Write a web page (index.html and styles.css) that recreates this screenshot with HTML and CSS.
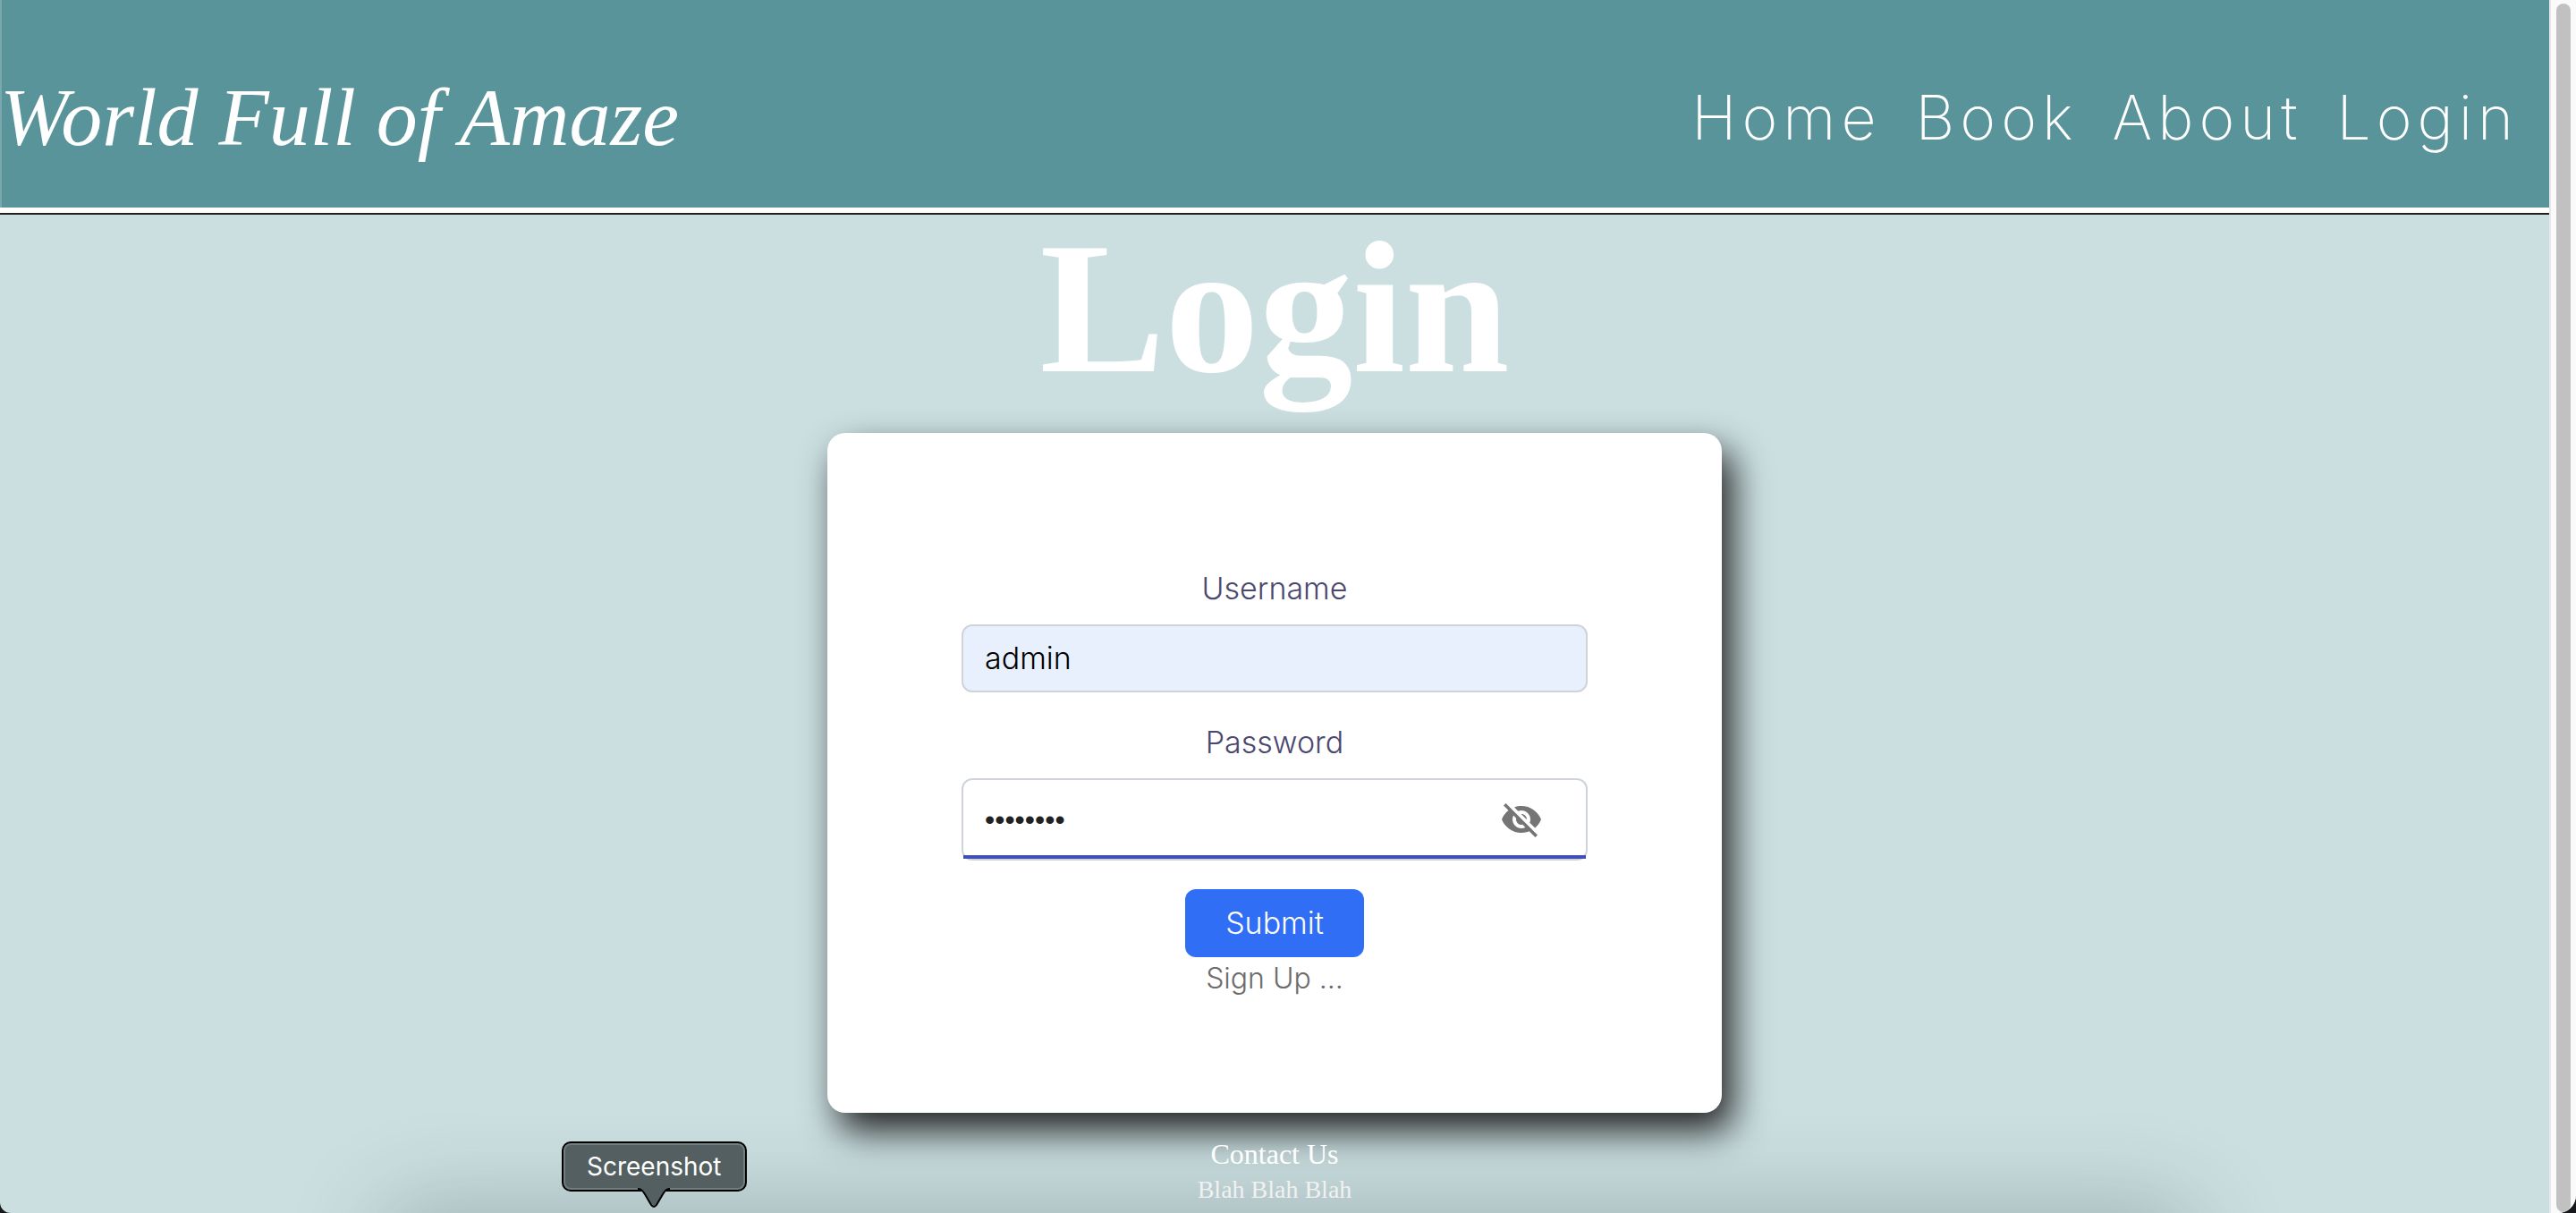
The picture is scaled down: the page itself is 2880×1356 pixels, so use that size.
FILE: index.html
```html
<!DOCTYPE html>
<html lang="en">
<head>
<meta charset="utf-8">
<meta name="viewport" content="width=device-width, initial-scale=1">
<title>World Full of Amaze - Login</title>
<link rel="stylesheet" href="styles.css">
</head>
<body>
<div class="window">
  <div class="page">
    <header class="site-header">
      <a class="brand" href="#">World Full of Amaze</a>
      <nav class="site-nav">
        <a href="#">Home</a>
        <a href="#">Book</a>
        <a href="#">About</a>
        <a href="#">Login</a>
      </nav>
    </header>
    <main class="content">
      <h1 class="title">Login</h1>
      <form class="card">
        <label class="label" for="username">Username</label>
        <input class="field field-filled" id="username" type="text" value="admin">
        <label class="label label-next" for="password">Password</label>
        <div class="field password">
          <input class="password-input" id="password" type="password" value="password">
          <button class="toggle" type="button" aria-label="Show password">
            <svg class="toggle-icon" viewBox="0 0 24 24"><path d="M12 7c2.76 0 5 2.24 5 5 0 .65-.13 1.26-.36 1.83l2.92 2.92c1.51-1.26 2.7-2.89 3.43-4.75-1.73-4.39-6-7.5-11-7.5-1.4 0-2.74.25-3.98.7l2.16 2.16C10.74 7.13 11.35 7 12 7zM2 4.27l2.28 2.28.46.46C3.08 8.3 1.78 10.02 1 12c1.73 4.39 6 7.5 11 7.5 1.55 0 3.03-.3 4.38-.84l.42.42L19.73 22 21 20.73 3.27 3 2 4.27zM7.53 9.8l1.55 1.55c-.05.21-.08.43-.08.65 0 1.66 1.34 3 3 3 .22 0 .44-.03.65-.08l1.55 1.55c-.67.33-1.41.53-2.2.53-2.76 0-5-2.24-5-5 0-.79.2-1.53.53-2.2zm4.31-.78l3.15 3.15.02-.16c0-1.66-1.34-3-3-3l-.17.01z"/></svg>
          </button>
        </div>
        <button class="submit" type="submit">Submit</button>
        <a class="signup" href="#">Sign Up ...</a>
      </form>
    </main>
    <footer class="footer">
      <p class="footer-title">Contact Us</p>
      <p class="footer-text">Blah Blah Blah</p>
    </footer>
  </div>
  <div class="scrollbar"><div class="thumb"></div></div>
  <div class="dock-shadow"></div>
  <div class="tooltip" role="tooltip">Screenshot
    <svg class="tooltip-tip" viewBox="0 0 36 24"><path d="M0 0H36V4C31 4 30 7 28 10L21 21Q18 25 15 21L8 10C6 7 5 4 0 4Z" fill="#535f60"/><path d="M0 3C5 3 6 6 8 9L15 21Q18 25 21 21L28 9C30 6 31 3 36 3" fill="none" stroke="#000" stroke-width="2"/></svg>
  </div>
</div>
</body>
</html>
```
FILE: styles.css
```css
* {
  box-sizing: border-box;
}

body {
  margin: 0;
  background: #16181c;
  font-family: Inter, "Liberation Sans", sans-serif;
  font-size: 34px;
  font-weight: 300;
  line-height: 48px;
}

a {
  color: inherit;
  text-decoration: none;
}

input,
button {
  font: inherit;
}

.window {
  position: relative;
  display: flex;
  min-height: 100vh;
  overflow: hidden;
  border-radius: 0 0 20px 12px;
  background: #cbdfe1;
}

.page {
  flex: 1;
  min-width: 0;
}

.site-header {
  display: flex;
  align-items: center;
  justify-content: space-between;
  min-height: 240px;
  padding: 24px 34px 0 0;
  border-bottom: 2px solid #212121;
  background: #5a949b;
  box-shadow: inset 0 -6px #fff, inset 2px 0 #79a8ad;
  color: #fff;
}

.brand {
  font-family: "Liberation Serif", serif;
  font-size: 92px;
  font-style: italic;
  line-height: 104px;
}

.site-nav {
  display: flex;
  gap: 38px;
  font-size: 68px;
  font-weight: 200;
  letter-spacing: 6px;
  line-height: 72px;
}

.content {
  display: flex;
  flex-direction: column;
  align-items: center;
}

.title {
  margin: 0 0 36px;
  color: #fff;
  font-family: "Liberation Serif", serif;
  font-size: 210px;
  font-weight: 700;
  line-height: 208px;
}

.card {
  display: flex;
  flex-direction: column;
  align-items: center;
  width: 100%;
  max-width: 1000px;
  padding: 150px 150px 126px;
  border-radius: 20px;
  background: #fff;
  box-shadow: 12px 20px 40px #222;
}

.label {
  margin-bottom: 16px;
  color: #4b4870;
}

.label-next {
  margin-top: 32px;
}

.field {
  width: 100%;
  padding: 12px 24px;
  border: 2px solid #ced4da;
  border-radius: 12px;
  background: #fff;
}

.field-filled {
  background: #e8f0fe;
  color: #000;
}

.password {
  position: relative;
  display: flex;
  align-items: center;
  min-height: 92px;
  padding-right: 48px;
}

.password::after {
  content: "";
  position: absolute;
  right: 0;
  bottom: 0;
  left: 0;
  height: 4px;
  background: #3f51b5;
}

.password-input {
  flex: 1;
  min-width: 0;
  padding: 0;
  border: 0;
  outline: 0;
  background: none;
  color: #212121;
  font-family: "Liberation Sans", sans-serif;
  font-size: 32px;
}

.toggle {
  display: flex;
  padding: 0;
  border: 0;
  background: none;
}

.toggle-icon {
  width: 48px;
  height: 48px;
  fill: #757575;
}

.submit {
  width: 200px;
  margin-top: 32px;
  padding: 14px;
  border: 0;
  border-radius: 12px;
  background: #306ef6;
  color: #fff;
}

.signup {
  color: #6c6c6c;
  font-size: 32px;
}

.footer {
  padding: 26px 0 6px;
  color: #fff;
  font-family: "Liberation Serif", serif;
  font-size: 32px;
  font-weight: 400;
  line-height: 40px;
  text-align: center;
}

.footer p {
  position: relative;
  z-index: 1;
  margin: 0;
}

.footer .footer-text {
  color: #f1f1f1;
  font-size: 28px;
}

.scrollbar {
  display: flex;
  width: 30px;
  padding: 4px 4px 1px 6px;
  border-left: 2px solid #e8e8e8;
  background: #fafafa;
}

.thumb {
  width: 16px;
  border-radius: 8px;
  background: #c1c1c1;
}

.dock-shadow {
  position: absolute;
  top: 100%;
  right: 15%;
  left: 15%;
  height: 100px;
  border-radius: 40px;
  box-shadow: 0 0 100px 10px rgba(40, 50, 55, 0.26);
}

.tooltip {
  position: absolute;
  bottom: 24px;
  left: 628px;
  padding: 6px 26px;
  border: 2px solid #000;
  border-radius: 10px;
  background: #535f60;
  box-shadow: inset 0 0 0 2px #717e7f;
  color: #fff;
  font-size: 28px;
  font-weight: 400;
  line-height: 40px;
}

.tooltip-tip {
  position: absolute;
  top: 100%;
  left: 50%;
  width: 36px;
  height: 24px;
  margin: -4px 0 0 -18px;
}
```
